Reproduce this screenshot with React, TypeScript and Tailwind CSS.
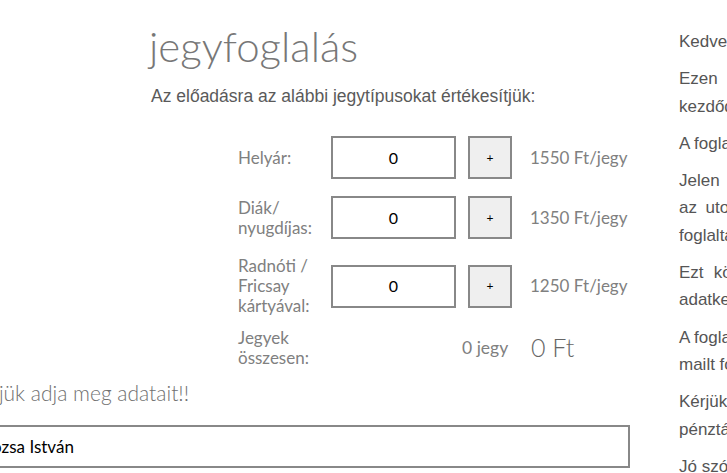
const ticketRows = [
  { id: 'helyar', label: ['Helyár:'], price: '1550 Ft/jegy' },
  { id: 'diak', label: ['Diák/', 'nyugdíjas:'], price: '1350 Ft/jegy' },
  { id: 'kartya', label: ['Radnóti /', 'Fricsay', 'kártyával:'], price: '1250 Ft/jegy' },
];

// each inner array is one paragraph, each string one rendered line
const infoText = [
  ['Kedves Nézőink!'],
  ['Ezen az oldalon foglalhat jegyet december 14-én', 'kezdődő előadásainkra.'],
  ['A foglalás díjtalan.'],
  ['Jelen foglalási rendszerben az előadás napja előtt', 'az utolsó munkanap déli 12 óráig van mód jegyet', 'foglaltatni.'],
  ['Ezt követően kérjük, személyesen érdeklődjön az', 'adatkezelőnknél.'],
  ['A foglalás sikeres elküldése után egy visszaigazoló e-', 'mailt fog kapni.'],
  ['Kérjük, a lefoglalt jegyeket az előadás előtt a', 'pénztárban vegye át.'],
  ['Jó szórakozást kívánunk!'],
];

const raleway = "font-['Lato','Open_Sans',sans-serif]";
const arial = "font-['Liberation_Sans',Arial,sans-serif]";

const App = () => {
  return (
    <div className="w-[727px] h-[473px] overflow-hidden bg-white flex">
      <div className="w-[660px] ml-[-30px] shrink-0">
        <h1 className={`${raleway} font-light text-[42px] leading-[48px] text-[#777] pl-[179px] pt-[22px]`}>
          jegyfoglalás
        </h1>
        <p className={`${arial} text-[17.5px] leading-[24px] text-[#5a5a5a] pl-[181px] mt-[14px]`}>
          Az előadásra az alábbi jegytípusokat értékesítjük:
        </p>

        <div className={`${raleway} pl-[268px] mt-[28px] text-[#808080]`}>
          {ticketRows.map((row) => (
            <div key={row.id} className="flex items-center mb-[17px]">
              <div className="w-[93px] text-[17px] leading-[20px]">
                {row.label.map((l) => (
                  <div key={l}>{l}</div>
                ))}
              </div>
              <div className="w-[125px] h-[43px] border-2 border-[#888] flex items-center justify-center text-[16px] text-black">
                0
              </div>
              <button className="ml-[12px] w-[44px] h-[43px] border-2 border-[#888] bg-[#efefef] text-[12px] text-black">
                +
              </button>
              <div className="ml-[18px] text-[17px]">{row.price}</div>
            </div>
          ))}

          <div className="flex items-center mt-[-5px]">
            <div className="w-[224px] text-[17px] leading-[20px]">
              <div>Jegyek</div>
              <div>összesen:</div>
            </div>
            <div className="w-[69px] text-[17.5px]">0 jegy</div>
            <div className="text-[25px] font-light text-[#666]">0 Ft</div>
          </div>
        </div>

        <p className={`${raleway} font-light text-[21px] leading-[26px] text-[#707070] mt-[12px] ml-[-2px]`}>
          Kérjük adja meg adatait!!
        </p>
        <div className={`${raleway} mt-[19px] h-[43px] border-2 border-[#888] flex items-center pl-[10px] text-[17px] text-black`}>
          Rózsa István
        </div>
      </div>

      <div className={`${arial} w-[400px] shrink-0 ml-[49px] pt-[28px] text-[17px] leading-[27.3px] text-[#555]`}>
        {infoText.map((para, i) => (
          <p key={i} className="mb-[10px]">
            {para.map((line, j) => (
              <span
                key={j}
                className={
                  j < para.length - 1
                    ? 'block whitespace-nowrap text-justify [text-align-last:justify]'
                    : 'block whitespace-nowrap'
                }
              >
                {line}
              </span>
            ))}
          </p>
        ))}
      </div>
    </div>
  );
};

export default App;
